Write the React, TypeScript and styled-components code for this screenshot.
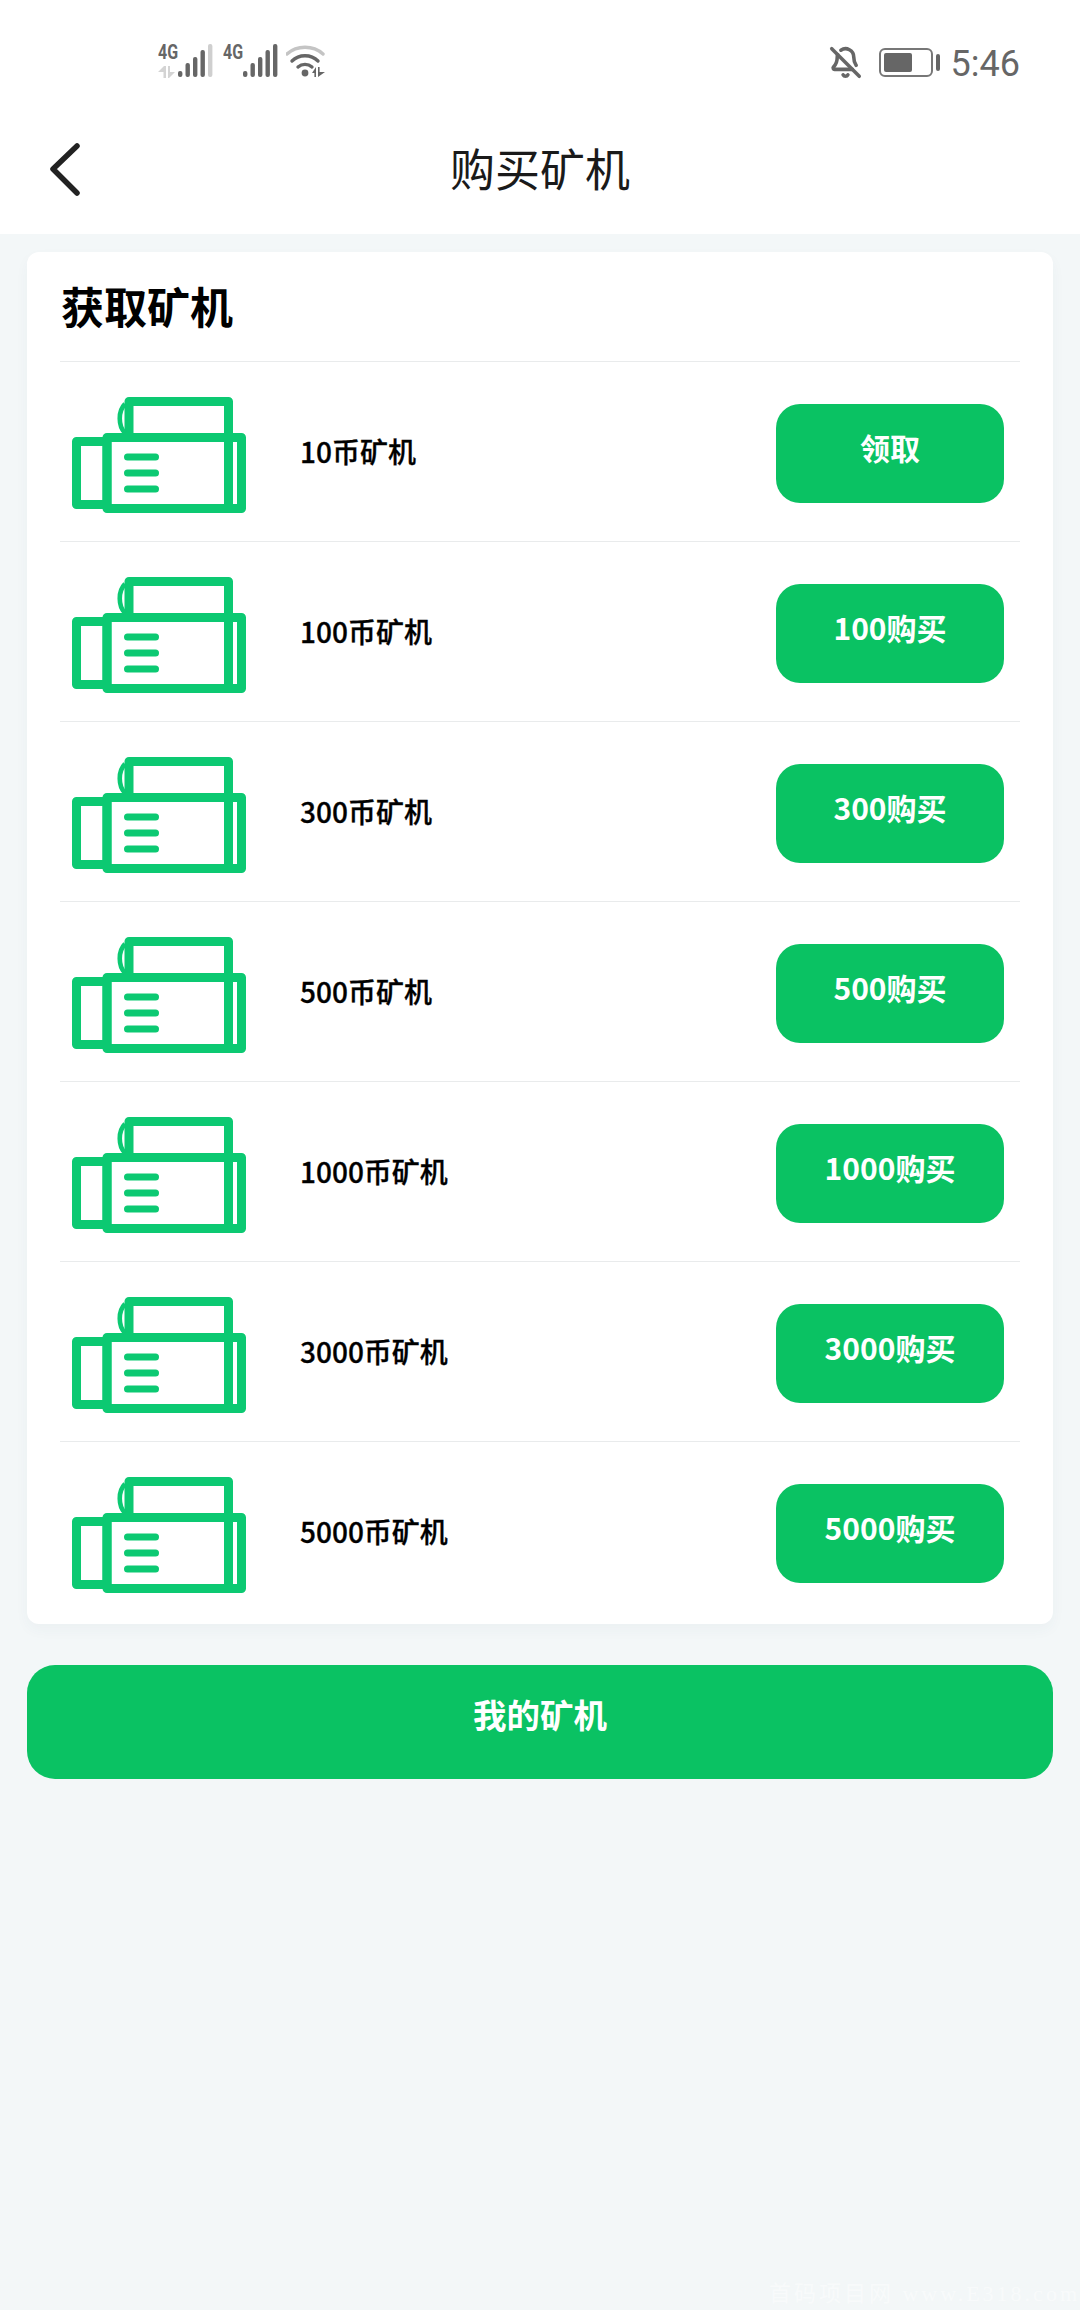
import styled, { createGlobalStyle } from "styled-components";
import { BellOff } from "lucide-react";

const GlobalStyle = createGlobalStyle`
  html, body {
    margin: 0;
    padding: 0;
    background: #f3f7f8;
  }
  * {
    box-sizing: border-box;
  }
`;

const GREEN = "#0ac263";
const ICON_GREEN = "#0cc972";
const FONT = `"Noto Sans CJK SC", "Noto Sans", sans-serif`;

const Page = styled.div`
  position: relative;
  width: 1080px;
  height: 2310px;
  overflow: hidden;
  background: #f3f7f8;
  font-family: ${FONT};
`;

const Header = styled.header`
  height: 234px;
  background: #fff;
  display: flex;
  flex-direction: column;
`;

const StatusBar = styled.div`
  height: 86px;
  padding: 44px 60px 0 158px;
  display: flex;
  align-items: flex-start;
  justify-content: space-between;
`;

const StatusGroup = styled.div`
  display: flex;
  align-items: flex-start;
`;

const SimLabel = styled.div`
  width: 19px;
  display: flex;
  flex-direction: column;
  align-items: flex-start;
`;

const NetText = styled.span`
  font-family: "Roboto", sans-serif;
  font-size: 20px;
  font-weight: 700;
  line-height: 16px;
  color: #666;
  transform: scaleX(0.8);
  transform-origin: left;
`;

const Sim = styled.div`
  display: flex;
  margin-right: 10px;
`;

const WifiWrap = styled.div`
  margin-left: -2px;
`;

const StatusRight = styled.div`
  display: flex;
  align-items: center;
  height: 36px;
`;

const Bell = styled(BellOff)`
  color: #666;
  margin-right: 17px;
`;

const Battery = styled.div`
  width: 54px;
  height: 29px;
  border: 2px solid #777;
  border-radius: 6px;
  padding: 3px;
  position: relative;
  margin-right: 18px;

  &::before {
    content: "";
    display: block;
    width: 28px;
    height: 100%;
    background: #666;
    border-radius: 2px;
  }

  &::after {
    content: "";
    position: absolute;
    right: -9px;
    top: 4px;
    width: 4px;
    height: 17px;
    background: #666;
    border-radius: 2px;
  }
`;

const Time = styled.span`
  font-family: "Roboto", sans-serif;
  font-size: 36px;
  line-height: 36px;
  margin-top: 4px;
  color: #666;
`;

const NavBar = styled.div`
  position: relative;
  flex: 1;
  display: flex;
  align-items: center;
  justify-content: center;
  padding-top: 16px;
`;

const BackButton = styled.svg`
  position: absolute;
  left: 47px;
  top: 57px;
`;

const NavTitle = styled.h1`
  margin: 0;
  font-size: 45px;
  line-height: 60px;
  font-weight: 400;
  color: #1a1a1a;
`;

const Content = styled.main`
  padding: 18px 27px 0;
`;

const Card = styled.section`
  background: #fff;
  border-radius: 12px;
  padding: 0 33px 3px;
  box-shadow: 0 6px 14px rgba(60, 80, 90, 0.04);
`;

const CardTitle = styled.h2`
  margin: 0;
  height: 109px;
  padding: 0 1px 4px;
  display: flex;
  align-items: center;
  font-size: 43px;
  font-weight: 700;
  color: #000;
`;

const Row = styled.div`
  height: 180px;
  border-top: 1px solid #e9ebec;
  padding: 0 16px 0 12px;
  display: flex;
  align-items: center;
`;

const MinerIcon = styled.svg`
  flex: none;
  margin: 6px 54px 0 0;
`;

const Label = styled.span`
  flex: 1;
  padding-bottom: 1px;
  font-size: 28px;
  font-weight: 500;
  -webkit-text-stroke: 0.3px #000;
  color: #000;
`;

const BuyButton = styled.button`
  width: 228px;
  height: 99px;
  margin-top: 4px;
  border: none;
  border-radius: 24px;
  padding: 0 0 14px;
  background: ${GREEN};
  color: #fff;
  font-family: ${FONT};
  font-size: 30px;
  font-weight: 700;
`;

const MineButton = styled.button`
  display: block;
  width: 100%;
  height: 114px;
  margin-top: 41px;
  border: none;
  border-radius: 28px;
  padding: 0 0 18px;
  background: ${GREEN};
  color: #fff;
  font-family: ${FONT};
  font-size: 33.5px;
  font-weight: 700;
`;

const Watermark = styled.div`
  position: absolute;
  right: 0;
  bottom: 3px;
  font-family: "Liberation Serif", "Noto Sans CJK SC", serif;
  font-size: 22px;
  letter-spacing: 3px;
  white-space: nowrap;
  color: rgba(255, 255, 255, 0.45);
`;

function Bars({ dimLast }: { dimLast?: boolean }) {
  const bars = [
    { x: 1, top: 27 },
    { x: 8.5, top: 19 },
    { x: 16, top: 13 },
    { x: 23.5, top: 6 },
    { x: 31, top: 0 },
  ];
  return (
    <svg width="36" height="34" viewBox="0 0 36 34">
      {bars.map((bar, i) => (
        <rect
          key={bar.x}
          x={bar.x}
          y={bar.top}
          width="4.4"
          height={33 - bar.top}
          rx="2"
          fill={dimLast && i === 4 ? "#cfcfcf" : "#666"}
        />
      ))}
    </svg>
  );
}

function Arrows() {
  return (
    <svg width="17" height="12" viewBox="0 0 17 12" style={{ marginTop: 6 }}>
      <path d="M0 6 L6 0 H8 V12 H5.5 V6 Z M10 0 H12 V6 H17 L11 12 H10 Z" fill="#d4d4d4" />
    </svg>
  );
}

function Wifi() {
  return (
    <svg width="40" height="34" viewBox="0 0 40 34">
      <path d="M1 10 C11 1 27 1 37 10" fill="none" stroke="#c4c4c4" strokeWidth="3.4" strokeLinecap="round" />
      <path d="M6 17 C13 10 25 10 32 17" fill="none" stroke="#666" strokeWidth="3.4" strokeLinecap="round" />
      <path d="M12 23 C16 19.5 22 19.5 26 23" fill="none" stroke="#666" strokeWidth="3.4" strokeLinecap="round" />
      <circle cx="19" cy="29" r="3.4" fill="#666" />
      <path d="M26 29 L30 23 V33 H28.4 V29 Z M32 23 H33.6 V28 H39 L32 33 Z" fill="#666" />
    </svg>
  );
}

function Miner() {
  return (
    <MinerIcon width="174" height="116" viewBox="0 0 174 116" fill="none" stroke={ICON_GREEN} strokeWidth="9" strokeLinejoin="round">
      <rect x="4.5" y="44.5" width="30.5" height="63" />
      <rect x="35" y="40.5" width="134.5" height="71" />
      <path d="M57 40 V4.5 H156.5 V112" />
      <path d="M53 7 C46 14 46 29 53 36" strokeWidth="4.6" />
      <g strokeWidth="7" strokeLinecap="round">
        <path d="M55.5 60 H83.5" />
        <path d="M55.5 76 H83.5" />
        <path d="M55.5 92 H83.5" />
      </g>
    </MinerIcon>
  );
}

const miners = [
  { label: "10币矿机", action: "领取" },
  { label: "100币矿机", action: "100购买" },
  { label: "300币矿机", action: "300购买" },
  { label: "500币矿机", action: "500购买" },
  { label: "1000币矿机", action: "1000购买" },
  { label: "3000币矿机", action: "3000购买" },
  { label: "5000币矿机", action: "5000购买" },
];

export default function App() {
  return (
    <Page>
      <GlobalStyle />
      <Header>
        <StatusBar>
          <StatusGroup>
            <Sim>
              <SimLabel>
                <NetText>4G</NetText>
                <Arrows />
              </SimLabel>
              <Bars dimLast />
            </Sim>
            <Sim>
              <SimLabel>
                <NetText>4G</NetText>
              </SimLabel>
              <Bars />
            </Sim>
            <WifiWrap>
              <Wifi />
            </WifiWrap>
          </StatusGroup>
          <StatusRight>
            <Bell size={33} strokeWidth={2.6} />
            <Battery />
            <Time>5:46</Time>
          </StatusRight>
        </StatusBar>
        <NavBar>
          <BackButton width="36" height="58" viewBox="0 0 36 58" fill="none" stroke="#222" strokeWidth="5.5" strokeLinecap="round" strokeLinejoin="round">
            <path d="M30 3 L6 26 L30 50" />
          </BackButton>
          <NavTitle>购买矿机</NavTitle>
        </NavBar>
      </Header>
      <Content>
        <Card>
          <CardTitle>获取矿机</CardTitle>
          {miners.map((miner) => (
            <Row key={miner.label}>
              <Miner />
              <Label>{miner.label}</Label>
              <BuyButton>{miner.action}</BuyButton>
            </Row>
          ))}
        </Card>
        <MineButton>我的矿机</MineButton>
      </Content>
      <Watermark>首码项目网 www.E318.com</Watermark>
    </Page>
  );
}
